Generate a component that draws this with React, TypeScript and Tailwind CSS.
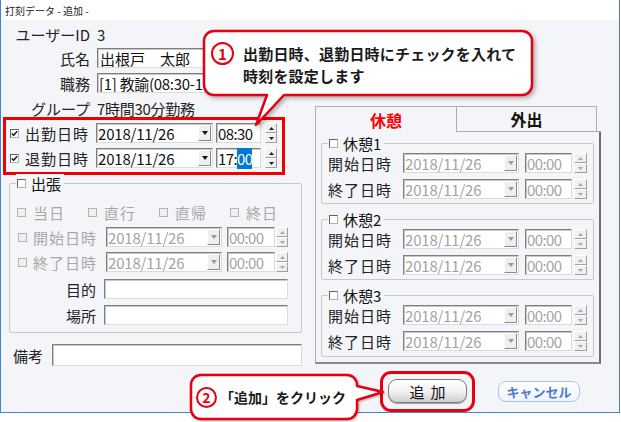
import React from 'react';

const sunken =
  'border border-t-[#7f7f7f] border-l-[#7f7f7f] border-r-[#dcdcdc] border-b-[#dcdcdc] shadow-[inset_1px_1px_0_#c8c8c8]';

function Check({ checked = false, disabled = false }: { checked?: boolean; disabled?: boolean }) {
  return (
    <span
      className={
        'inline-flex shrink-0 w-[9px] h-[9px] border items-center justify-center ' +
        (disabled
          ? 'border-[#b4b4b4] bg-[#f0f0f0]'
          : 'border-t-[#606060] border-l-[#606060] border-r-[#b0b0b0] border-b-[#b0b0b0] bg-white')
      }
    >
      {checked && (
        <svg width="7" height="7" viewBox="0 0 7 7">
          <path d="M0.8 3.4 L2.7 5.3 L6.2 1.2" fill="none" stroke="#111" strokeWidth="1.4" />
        </svg>
      )}
    </span>
  );
}

function DateBox({ w, disabled = false }: { w: string; disabled?: boolean }) {
  return (
    <div className={`${w} h-[20px] shrink-0 flex items-center bg-white ${sunken}`}>
      <span
        className={
          'pl-[1px] text-[15px] leading-none tracking-[-0.2px] ' + (disabled ? 'text-[#a3a3a3]' : 'text-[#111]')
        }
      >
        2018/11/26
      </span>
      <span className="ml-auto mr-[1px] w-[13px] h-[16px] bg-[#efefef] border border-t-white border-l-white border-r-[#8a8a8a] border-b-[#8a8a8a] flex items-center justify-center">
        <svg width="6" height="4" viewBox="0 0 6 4">
          <polygon points="0,0 6,0 3,4" fill={disabled ? '#9a9a9a' : '#111'} />
        </svg>
      </span>
    </div>
  );
}

function TimeBox({
  w,
  value,
  disabled = false,
  highlight = false,
}: {
  w: string;
  value: string;
  disabled?: boolean;
  highlight?: boolean;
}) {
  return (
    <div className={`${w} h-[20px] shrink-0 flex items-center bg-white ${sunken}`}>
      <span
        className={
          'pl-[1px] text-[15px] leading-none tracking-[-0.6px] ' + (disabled ? 'text-[#a3a3a3]' : 'text-[#111]')
        }
      >
        {highlight ? (
          <>
            {value.slice(0, 3)}
            <span className="bg-[#0078d7] text-white">{value.slice(3)}</span>
          </>
        ) : (
          value
        )}
      </span>
    </div>
  );
}

function Spin({ w = 'w-[12px]', disabled = false }: { w?: string; disabled?: boolean }) {
  const c = disabled ? '#a8a8a8' : '#222';
  return (
    <div className={`${w} h-[20px] shrink-0 flex flex-col`}>
      <span className="flex-1 bg-[#f0f0f0] border border-t-white border-l-white border-r-[#a0a0a0] border-b-[#a0a0a0] flex items-center justify-center">
        <svg width="5" height="3" viewBox="0 0 5 3">
          <polygon points="0,3 5,3 2.5,0" fill={c} />
        </svg>
      </span>
      <span className="flex-1 bg-[#f0f0f0] border border-t-white border-l-white border-r-[#a0a0a0] border-b-[#a0a0a0] flex items-center justify-center">
        <svg width="5" height="3" viewBox="0 0 5 3">
          <polygon points="0,0 5,0 2.5,3" fill={c} />
        </svg>
      </span>
    </div>
  );
}

function Legend({ label, left }: { label: string; left: string }) {
  return (
    <div className={`absolute top-[-10px] ${left} bg-[#f4f5f8] h-[18px] flex items-center pl-[1px] pr-[3px]`}>
      <Check />
      <span className="ml-[5px] text-[15px] leading-none text-[#111]">{label}</span>
    </div>
  );
}

function BreakGroup({ n, mt, h }: { n: string; mt: string; h: string }) {
  return (
    <div className={`relative ${mt} ml-[5px] w-[273px] ${h} border border-[#c9c9c9] rounded-[2px] pt-[9px]`}>
      <Legend label={`休憩${n}`} left="left-[6px]" />
      {['開始日時', '終了日時'].map((l, i) => (
        <div key={l} className={`flex items-center h-[20px] pl-[6px] ${i === 1 ? 'mt-[6px]' : ''}`}>
          <span className="w-[66px] text-[15px] leading-none tracking-[1px] text-[#222]">{l}</span>
          <span className="ml-[9px]">
            <DateBox w="w-[116px]" disabled />
          </span>
          <span className="ml-[6px]">
            <TimeBox w="w-[47px]" value="00:00" disabled />
          </span>
          <span className="ml-[2px]">
            <Spin w="w-[13px]" disabled />
          </span>
        </div>
      ))}
    </div>
  );
}

export default function App() {
  return (
    <div className="w-[621px] h-[422px] bg-white relative overflow-hidden font-['Noto_Sans_CJK_JP','Noto_Sans',sans-serif] text-[#111]">
      <div className="w-[620px] h-[413px] border-l border-r border-b border-[#3d86cc] flex flex-col">
        <div className="h-[20px] shrink-0 bg-white flex items-center pl-[4px] text-[10px] text-[#222]">
          打刻データ - 追加 -
        </div>
        <div className="flex-1 bg-[#f4f5f8] flex flex-col">
          <div className="flex h-[348px] shrink-0">
            {/* left column */}
            <div className="w-[304px] shrink-0 flex flex-col">
              <div className="mt-[4px] h-[20px] flex items-center">
                <span className="w-[89px] text-right text-[15px] leading-none text-[#222]">ユーザーID</span>
                <span className="ml-[7px] text-[15px] leading-none text-[#222]">3</span>
              </div>
              <div className="mt-[4px] h-[20px] flex items-center">
                <span className="w-[89px] text-right text-[15px] leading-none text-[#222]">氏名</span>
                <div className={`ml-[7px] w-[150px] h-[20px] bg-white flex items-center ${sunken}`}>
                  <span className="pl-[2px] text-[15px] leading-none">出根戸　太郎</span>
                </div>
              </div>
              <div className="mt-[5px] h-[20px] flex items-center">
                <span className="w-[89px] text-right text-[15px] leading-none text-[#222]">職務</span>
                <div className={`ml-[7px] w-[150px] h-[20px] bg-white flex items-center overflow-hidden ${sunken}`}>
                  <span className="pl-[1px] text-[15px] leading-none whitespace-nowrap tracking-[-0.3px]">
                    [1] 教諭(08:30-17:00)
                  </span>
                </div>
              </div>
              <div className="mt-[6px] h-[18px] flex items-center">
                <span className="w-[89px] text-right text-[15px] leading-none text-[#222]">グループ</span>
                <span className="ml-[7px] text-[15px] leading-none text-[#222] tracking-[-0.3px]">7時間30分勤務</span>
              </div>
              {/* red highlight box */}
              <div className="ml-[2px] w-[282px] h-[58px] border-[3px] border-[#f00000] pt-[3px] flex flex-col">
                {[
                  { l: '出勤日時', t: '08:30', h: false },
                  { l: '退勤日時', t: '17:00', h: true },
                ].map((r, i) => (
                  <div key={r.l} className={`flex items-center h-[20px] pl-[4px] ${i === 1 ? 'mt-[5px]' : ''}`}>
                    <Check checked />
                    <span className="ml-[6px] w-[65px] text-[15px] leading-none tracking-[1px] text-[#222]">{r.l}</span>
                    <span className="ml-[6px]">
                      <DateBox w="w-[117px]" />
                    </span>
                    <span className="ml-[3px]">
                      <TimeBox w="w-[45px]" value={r.t} highlight={r.h} />
                    </span>
                    <span className="ml-[4px]">
                      <Spin />
                    </span>
                  </div>
                ))}
              </div>
              {/* business trip group */}
              <div className="relative mt-[8px] ml-[8px] w-[293px] h-[150px] border border-[#c9c9c9] rounded-[2px] pt-[18px]">
                <Legend label="出張" left="left-[6px]" />
                <div className="flex items-center h-[20px] pl-[7px]">
                  {['当日', '直行', '直帰', '終日'].map((l) => (
                    <div key={l} className="w-[74px] flex items-center">
                      <Check disabled />
                      <span className="ml-[7px] text-[15px] leading-none tracking-[1px] text-[#a8a8a8]">{l}</span>
                    </div>
                  ))}
                </div>
                {['開始日時', '終了日時'].map((l) => (
                  <div key={l} className="mt-[5px] flex items-center h-[20px] pl-[8px]">
                    <Check disabled />
                    <span className="ml-[6px] w-[66px] text-[15px] leading-none tracking-[1px] text-[#a8a8a8]">{l}</span>
                    <span className="ml-[7px]">
                      <DateBox w="w-[116px]" disabled />
                    </span>
                    <span className="ml-[5px]">
                      <TimeBox w="w-[48px]" value="00:00" disabled />
                    </span>
                    <span className="ml-[1px]">
                      <Spin disabled />
                    </span>
                  </div>
                ))}
                {['目的', '場所'].map((l, i) => (
                  <div key={l} className={`flex items-center h-[20px] ${i === 0 ? 'mt-[7px]' : 'mt-[6px]'}`}>
                    <span className="w-[86px] text-right text-[15px] leading-none text-[#222]">{l}</span>
                    <div className={`ml-[8px] w-[184px] h-[20px] bg-white ${sunken}`} />
                  </div>
                ))}
              </div>
              <div className="mt-[11px] h-[22px] flex items-center">
                <span className="ml-[12px] w-[30px] text-[15px] leading-none text-[#222]">備考</span>
                <div className={`ml-[9px] w-[250px] h-[22px] bg-white ${sunken}`} />
              </div>
            </div>
            {/* right column */}
            <div className="ml-[10px] mt-[86px] w-[286px] shrink-0 flex flex-col">
              <div className="flex h-[26px]">
                <div className="w-[142px] border border-b-0 border-[#adadad] bg-[#f4f5f8] flex items-center justify-center text-[16px] font-bold text-[#ff0000] leading-none">
                  休憩
                </div>
                <div className="w-[140px] border-t border-r border-b border-[#adadad] bg-[#f4f5f8] flex items-center justify-center text-[16px] font-bold text-[#111] leading-none">
                  外出
                </div>
                <div className="flex-1 border-b border-[#adadad]" />
              </div>
              <div className="h-[232px] border-l border-b-2 border-r-2 border-l-[#adadad] border-b-[#8a8a8a] border-r-[#6e6e6e] flex flex-col">
                <BreakGroup n="1" mt="mt-[11px]" h="h-[61px]" />
                <BreakGroup n="2" mt="mt-[15px]" h="h-[61px]" />
                <BreakGroup n="3" mt="mt-[15px]" h="h-[62px]" />
              </div>
            </div>
          </div>
          {/* buttons */}
          <div className="flex items-start pl-[387px] pt-[11px]">
            <div className="relative">
              <div className="w-[79px] h-[24px] rounded-[9px] border border-[#7c7c7c] bg-gradient-to-b from-white via-[#f2f2f2] to-[#cfcfcf] shadow-[0_1px_1px_rgba(0,0,0,0.35)] flex items-center justify-center text-[15px] leading-none tracking-[6px] pl-[6px] text-[#111]">
                追加
              </div>
              <div className="absolute left-[-8px] top-[-8px] w-[95px] h-[41px] border-[3px] border-[#e60012] rounded-[11px]" />
            </div>
            <div className="ml-[31px] mt-[2px] w-[82px] h-[21px] rounded-[8px] border border-[#a9c4e6] bg-gradient-to-b from-white to-[#eef3fb] flex items-center justify-center text-[13px] font-bold leading-none text-[#4d7cc6]">
              キャンセル
            </div>
          </div>
        </div>
      </div>

      {/* callout 1 */}
      <svg
        className="absolute left-[200px] top-[28px] drop-shadow-[2px_2px_2px_rgba(0,0,0,0.3)]"
        width="340"
        height="100"
        viewBox="0 0 340 100"
      >
        <path
          d="M 14 3 H 322 A 10 10 0 0 1 332 13 V 57 A 10 10 0 0 1 322 67 H 84 L 56 97 L 67 67 H 14 A 10 10 0 0 1 4 57 V 13 A 10 10 0 0 1 14 3 Z"
          fill="white"
          stroke="#e60012"
          strokeWidth="2.5"
          strokeLinejoin="round"
        />
      </svg>
      <div className="absolute left-[211px] top-[42px] flex flex-col">
        <div className="flex items-center h-[22px]">
          <span className="w-[23px] h-[23px] rounded-full border-[2.5px] border-[#e60012] flex items-center justify-center text-[15px] font-bold text-[#e60012] leading-none">
            1
          </span>
          <span className="ml-[9px] text-[15px] font-bold leading-none text-[#1a1a1a] tracking-[0.2px]">
            出勤日時、退勤日時にチェックを入れて
          </span>
        </div>
        <div className="ml-[32px] mt-[0px] h-[22px] flex items-center text-[15px] font-bold leading-none text-[#1a1a1a] tracking-[0.2px]">
          時刻を設定します
        </div>
      </div>

      {/* callout 2 */}
      <svg
        className="absolute left-[186px] top-[370px] drop-shadow-[1px_1px_1px_rgba(0,0,0,0.3)]"
        width="210"
        height="52"
        viewBox="0 0 210 52"
      >
        <path
          d="M 15 5 H 161 A 10 10 0 0 1 171 15 V 16 L 197 22 L 171 30 V 39 A 10 10 0 0 1 161 49 H 15 A 10 10 0 0 1 5 39 V 15 A 10 10 0 0 1 15 5 Z"
          fill="white"
          stroke="#e60012"
          strokeWidth="2.5"
          strokeLinejoin="round"
        />
      </svg>
      <div className="absolute left-[196px] top-[386px] h-[22px] flex items-center">
        <span className="w-[21px] h-[21px] rounded-full border-[2.5px] border-[#e60012] flex items-center justify-center text-[14px] font-bold text-[#e60012] leading-none">
          2
        </span>
        <span className="ml-[3px] text-[14px] font-bold leading-none text-[#1a1a1a]">「追加」をクリック</span>
      </div>
    </div>
  );
}
